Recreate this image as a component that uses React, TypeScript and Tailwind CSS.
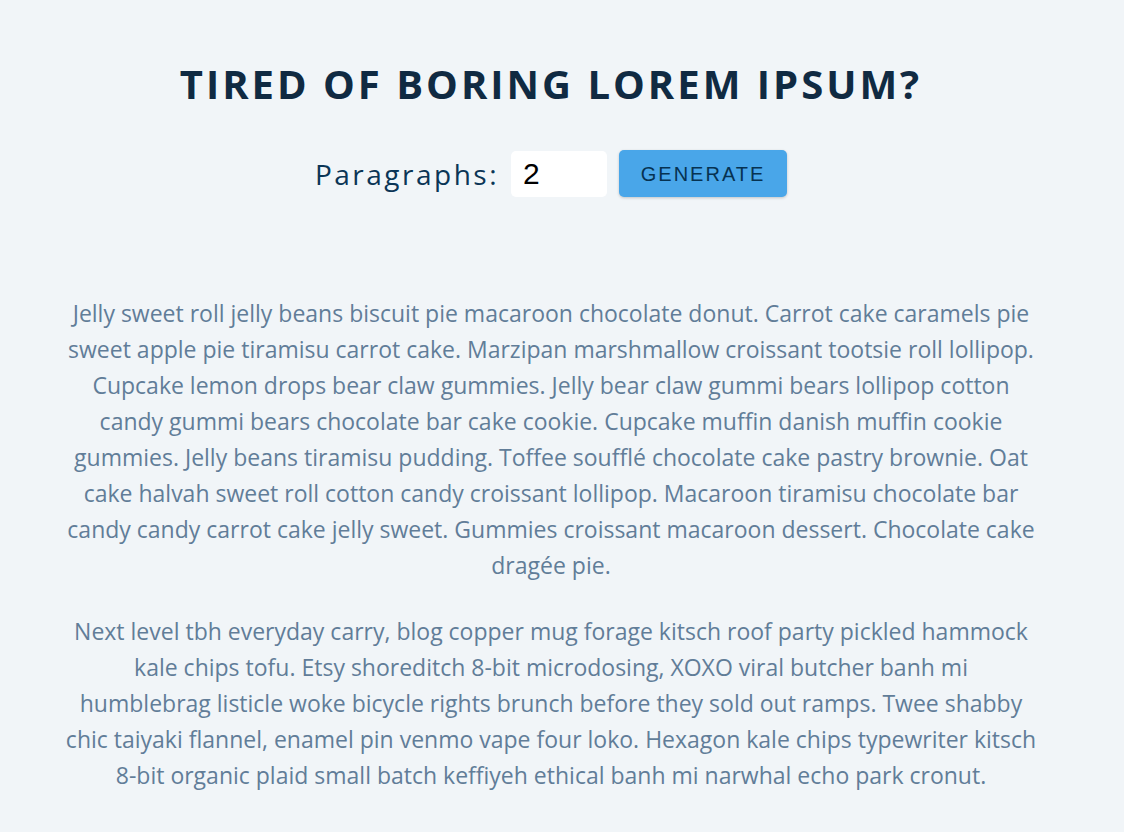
import { useState } from "react";

const text = [
  "Jelly sweet roll jelly beans biscuit pie macaroon chocolate donut. Carrot cake caramels pie sweet apple pie tiramisu carrot cake. Marzipan marshmallow croissant tootsie roll lollipop. Cupcake lemon drops bear claw gummies. Jelly bear claw gummi bears lollipop cotton candy gummi bears chocolate bar cake cookie. Cupcake muffin danish muffin cookie gummies. Jelly beans tiramisu pudding. Toffee soufflé chocolate cake pastry brownie. Oat cake halvah sweet roll cotton candy croissant lollipop. Macaroon tiramisu chocolate bar candy candy carrot cake jelly sweet. Gummies croissant macaroon dessert. Chocolate cake dragée pie.",
  "Next level tbh everyday carry, blog copper mug forage kitsch roof party pickled hammock kale chips tofu. Etsy shoreditch 8-bit microdosing, XOXO viral butcher banh mi\nhumblebrag listicle woke bicycle rights brunch before they sold out ramps. Twee shabby chic taiyaki flannel, enamel pin venmo vape four loko. Hexagon kale chips typewriter kitsch 8-bit organic plaid small batch keffiyeh ethical banh mi narwhal echo park cronut.",
];

function App() {
  const [count, setCount] = useState(2);
  const [paras, setParas] = useState(text);

  const handleSubmit = (e: React.FormEvent) => {
    e.preventDefault();
    let amount = count;
    if (amount <= 0) amount = 1;
    if (amount > text.length) amount = text.length;
    setParas(text.slice(0, amount));
  };

  return (
    <div className="min-h-[832px] bg-[#f1f5f8] pr-[22px] font-['Open_Sans',sans-serif]">
      <section className="mx-auto w-[978px] pt-[52px] text-center">
        <h3 className="text-[40px] font-bold uppercase leading-[64px] tracking-[3px] text-[#102a42]">
          tired of boring lorem ipsum?
        </h3>
        <form className="mt-[34px] flex items-center justify-center" onSubmit={handleSubmit}>
          <label htmlFor="amount" className="mr-[12px] text-[28px] tracking-[2.5px] text-[#0b3556]">
            Paragraphs:
          </label>
          <input
            type="number"
            name="amount"
            id="amount"
            value={count}
            onChange={(e) => setCount(Number(e.target.value))}
            className="h-[46px] w-[96px] rounded-[5px] bg-white px-[12px] font-['Liberation_Sans',sans-serif] text-[30px] text-black outline-none"
          />
          <button
            type="submit"
            className="ml-[12px] h-[47px] w-[168px] rounded-[5px] bg-[#49a6e9] font-['Liberation_Sans',sans-serif] text-[20px] uppercase tracking-[2px] text-[#063251] shadow-[0_1px_3px_rgba(0,0,0,0.2)]"
          >
            generate
          </button>
        </form>
        <article className="mt-[98px]">
          {paras.map((p, i) => (
            <p key={i} className="mb-[30px] whitespace-pre-line text-[23px] leading-[36px] text-[#617d98]">
              {p}
            </p>
          ))}
        </article>
      </section>
    </div>
  );
}

export default App;
